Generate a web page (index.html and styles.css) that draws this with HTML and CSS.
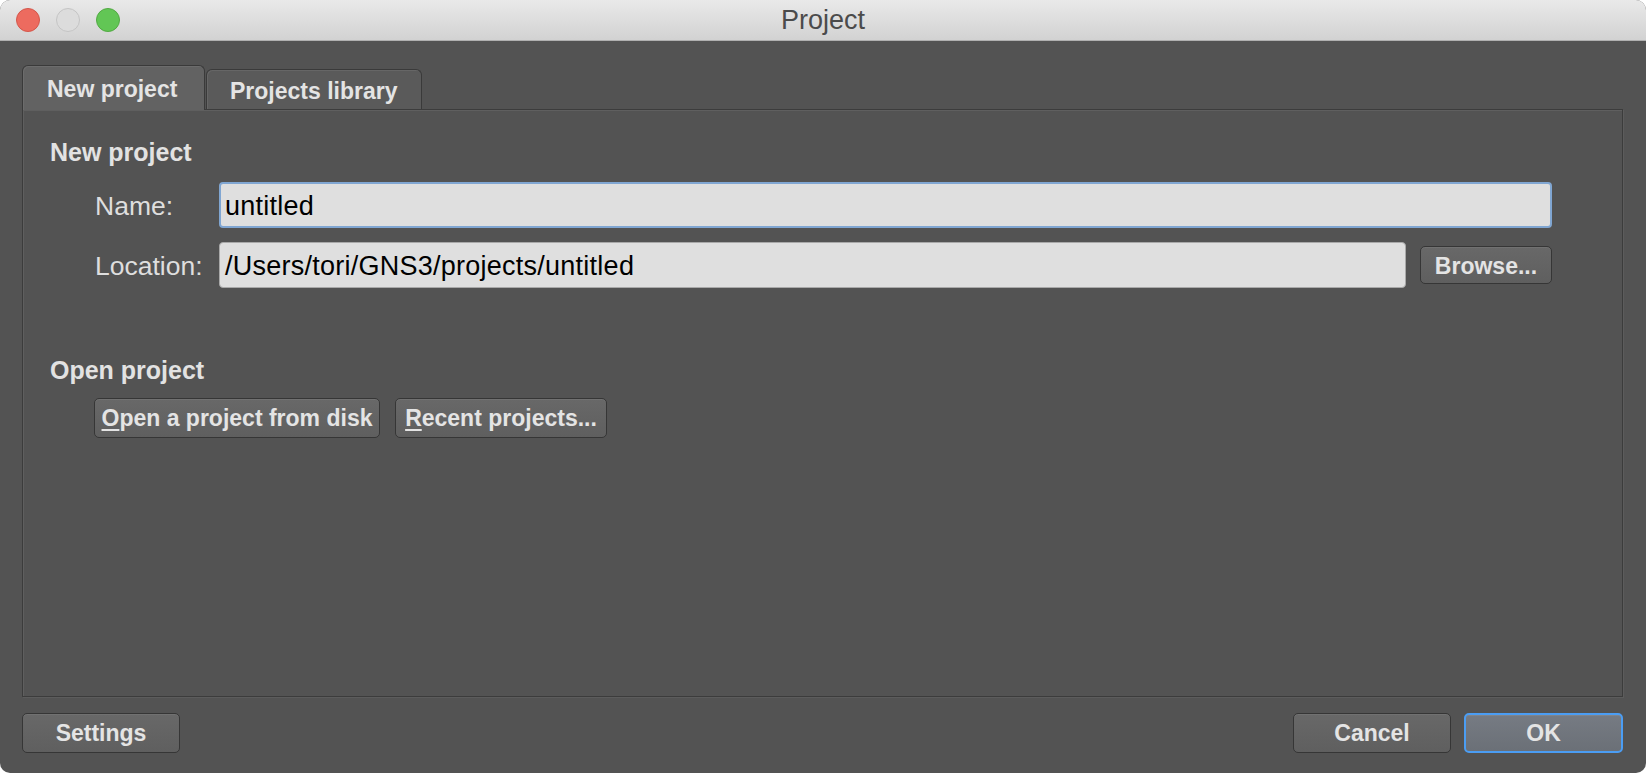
FILE: index.html
```html
<!DOCTYPE html>
<html>
<head>
<meta charset="utf-8">
<title>Project</title>
<link rel="stylesheet" href="styles.css">
</head>
<body>
<div class="window">
  <div class="titlebar">
    <div class="lights">
      <span class="light red"></span>
      <span class="light gray"></span>
      <span class="light green"></span>
    </div>
    <div class="title">Project</div>
  </div>
  <div class="content">
    <div class="tabs">
      <div class="tab active">New project</div>
      <div class="tab">Projects library</div>
    </div>
    <div class="pane">
      <div class="section-title">New project</div>
      <div class="form">
        <div class="row">
          <label class="label">Name:</label>
          <div class="field focus">untitled</div>
        </div>
        <div class="row">
          <label class="label">Location:</label>
          <div class="field">/Users/tori/GNS3/projects/untitled</div>
          <button class="btn browse">Browse...</button>
        </div>
      </div>
      <div class="section-title open-title">Open project</div>
      <div class="open-actions">
        <button class="btn open-disk"><u>O</u>pen a project from disk</button>
        <button class="btn recent"><u>R</u>ecent projects...</button>
      </div>
    </div>
    <div class="footer">
      <button class="btn foot">Settings</button>
      <div class="foot-right">
        <button class="btn foot">Cancel</button>
        <button class="btn foot ok">OK</button>
      </div>
    </div>
  </div>
</div>
</body>
</html>
```
FILE: styles.css
```css
* { box-sizing: border-box; }
html, body {
  margin: 0;
  padding: 0;
  background: #ffffff;
  width: 1647px;
  height: 773px;
  overflow: hidden;
}
body {
  font-family: "Liberation Sans", Arial, sans-serif;
}
.window {
  width: 1646px;
  height: 773px;
  border-radius: 10px;
  overflow: hidden;
  display: flex;
  flex-direction: column;
  background: #535353;
}
.titlebar {
  height: 41px;
  flex: 0 0 41px;
  background: linear-gradient(#e9e9e9, #d2d2d2);
  border-bottom: 1px solid #b0b0b0;
  display: flex;
  align-items: center;
  position: relative;
}
.lights {
  display: flex;
  gap: 16px;
  padding-left: 16px;
}
.light {
  width: 24px;
  height: 24px;
  border-radius: 50%;
  display: block;
}
.light.red { background: #ed6b5f; border: 1px solid #d3574b; }
.light.gray { background: #dcdcdc; border: 1px solid #c4c4c4; }
.light.green { background: #62c655; border: 1px solid #52a943; }
.title {
  position: absolute;
  left: 0;
  right: 0;
  top: 1px;
  bottom: 0;
  display: flex;
  align-items: center;
  justify-content: center;
  font-size: 27px;
  color: #4b4b4b;
  pointer-events: none;
}
.content {
  flex: 1;
  display: flex;
  flex-direction: column;
  padding: 24px 23px 20px 22px;
}
.tabs {
  display: flex;
  align-items: flex-end;
  gap: 1px;
  height: 45px;
  margin-bottom: -1px;
  position: relative;
  z-index: 2;
}
.tab {
  height: 40px;
  padding: 4px 23px 0 23px;
  border: 1px solid #3a3a3a;
  border-bottom: none;
  border-radius: 6px 6px 0 0;
  background: #5a5a5a;
  box-shadow: inset 1px 1px 0 #666;
  color: #e4e4e4;
  font-weight: bold;
  font-size: 23px;
  display: flex;
  align-items: center;
  margin-bottom: 1px;
  width: 216px;
}
.tab.active {
  height: 45px;
  width: 183px;
  margin-bottom: 0;
  background: #626262;
  box-shadow: inset 1px 1px 0 #6c6c6c;
  padding: 2px 0 0 24px;
}
.pane {
  flex: 1;
  border: 1px solid #3c3c3c;
  box-shadow: inset 1px 1px 0 #5f5f5f, 1px 1px 0 #5c5c5c;
  background: #535353;
  padding: 27px 70px 0 27px;
  display: flex;
  flex-direction: column;
}
.section-title {
  font-size: 25px;
  line-height: 30px;
  font-weight: bold;
  color: #e2e2e2;
}
.form {
  display: flex;
  flex-direction: column;
  gap: 14px;
  margin-top: 15px;
  padding-left: 45px;
}
.row {
  display: flex;
  align-items: center;
  gap: 14px;
}
.label {
  width: 110px;
  flex: 0 0 110px;
  font-size: 26.5px;
  color: #dedede;
  padding-top: 3px;
}
.field {
  flex: 1;
  height: 46px;
  background: #dfdfdf;
  border: 1px solid #a9a9a9;
  border-radius: 4px;
  font-size: 27px;
  letter-spacing: 0.25px;
  color: #000;
  display: flex;
  align-items: center;
  padding-left: 5px;
  padding-top: 2px;
}
.field.focus {
  border: 2px solid #80a6d2;
  padding-left: 4px;
}
.btn {
  font-family: "Liberation Sans", Arial, sans-serif;
  font-weight: bold;
  font-size: 23px;
  color: #e4e4e4;
  background: linear-gradient(#686868, #5f5f5f);
  border: 1px solid #363636;
  border-radius: 5px;
  box-shadow: inset 0 1px 0 #717171;
  height: 40px;
  padding: 0;
  display: flex;
  align-items: center;
  justify-content: center;
}
.btn u {
  text-decoration: underline;
  text-underline-offset: 3px;
  text-decoration-thickness: 2px;
}
.browse {
  width: 132px;
  height: 38px;
  flex: 0 0 132px;
  padding-top: 2px;
}
.open-title {
  margin-top: 67px;
}
.open-actions {
  display: flex;
  gap: 15px;
  margin-top: 13px;
  padding-left: 44px;
}
.open-disk { width: 286px; padding-top: 1px; }
.recent { width: 212px; padding-top: 1px; }
.footer {
  display: flex;
  justify-content: space-between;
  align-items: center;
  margin-top: 16px;
}
.foot-right {
  display: flex;
  gap: 13px;
}
.foot {
  width: 158px;
  height: 40px;
}
.ok {
  width: 159px;
  background: linear-gradient(#767b83, #6b7077);
  border: 2px solid #4b9df3;
  box-shadow: inset 0 1px 0 #80858c;
}
```
